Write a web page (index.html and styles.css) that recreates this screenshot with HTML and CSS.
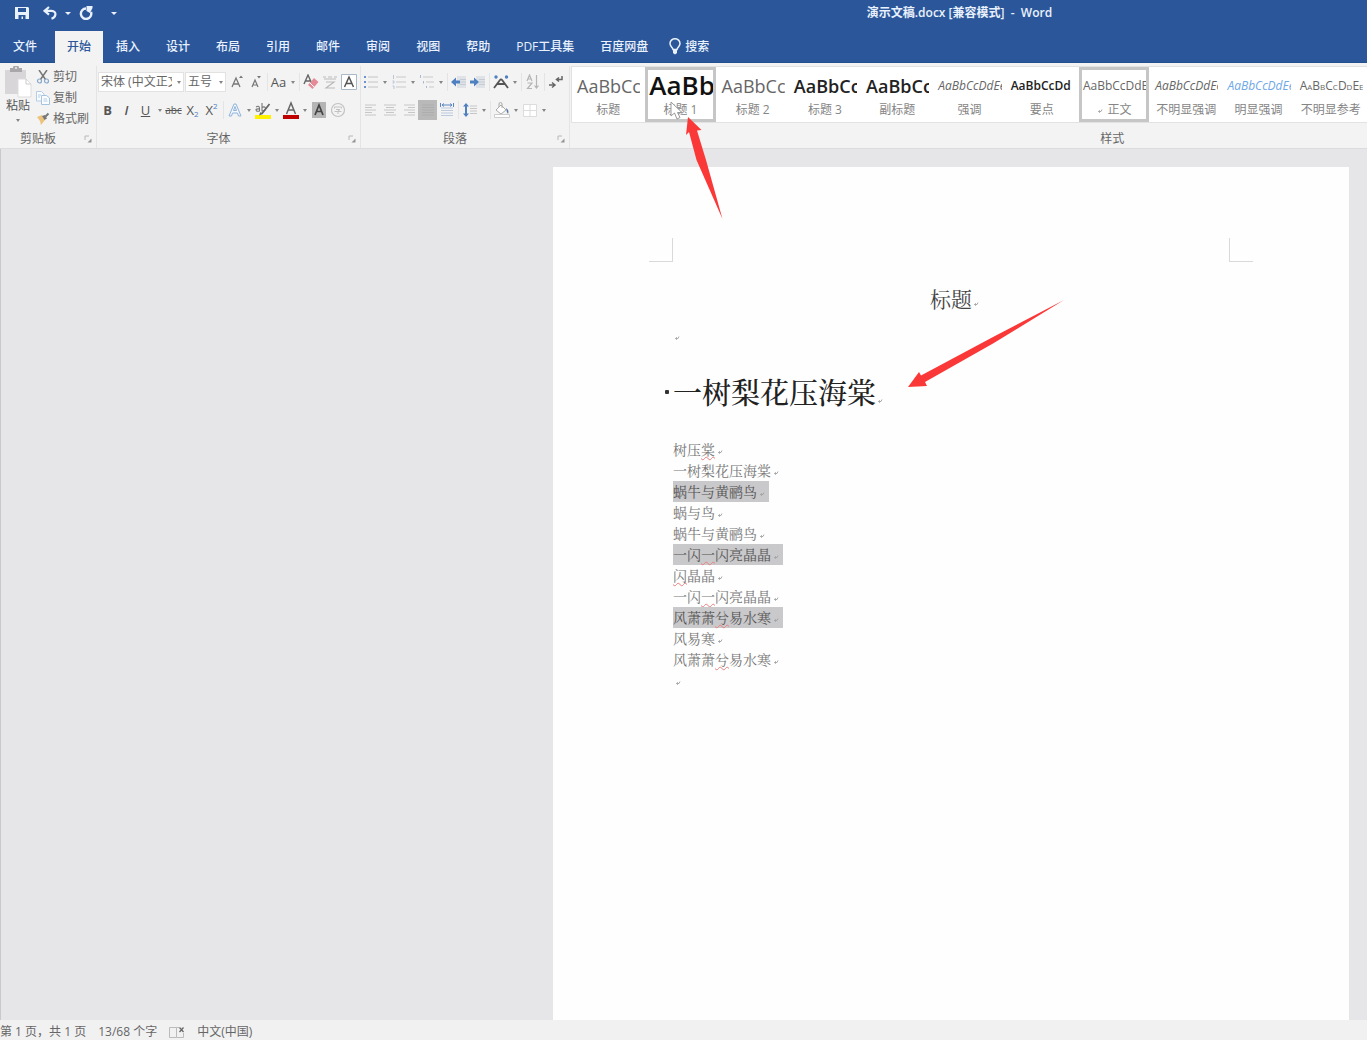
FILE: index.html
```html
<!DOCTYPE html>
<html lang="zh-CN">
<head>
<meta charset="utf-8">
<meta name="viewport" content="width=device-width, initial-scale=1">
<title>演示文稿.docx [兼容模式] - Word</title>
<link rel="stylesheet" href="styles.css">
</head>
<body>
<svg class="sprite" aria-hidden="true">
  <symbol id="mark" viewBox="0 0 8 6"><path d="M6 1.500 5 3.500H2.500M3.800 2.200 2.500 3.500 3.800 4.800" fill="none" stroke="#a0a0a0" stroke-width="0.9"/></symbol>
  <symbol id="launch" viewBox="0 0 8 8"><path d="M1 5V1H5" fill="none" stroke="#b8b8b8"/><path d="M7.500 3.500V7.500H3.500Z" fill="#959595"/></symbol>
</svg>

<header class="titlebar">
  <div class="quick">
    <button aria-label="保存"><svg width="14" height="14" viewBox="0 0 14 14"><path d="M0 1H13L14 2V13H0Z" fill="#e9f1fc"/><path d="M3 2H11V6H3ZM3.500 9H10.500V13H8V10.500H6.500V13H3.500Z" fill="#2b579a"/></svg></button>
    <button aria-label="撤消"><svg width="14" height="14" viewBox="0 0 14 14"><path d="M6 1 1.500 4.800 6 8.600M2 4.800H8.500C11.500 4.800 12.800 6.800 12.300 9 12 10.800 10.800 12 8.500 12.800" fill="none" stroke="#e9f1fc" stroke-width="2.200"/></svg></button>
    <button class="caret light" aria-label="撤消列表"></button>
    <button aria-label="重复"><svg width="14" height="14" viewBox="0 0 14 14"><path d="M7 2.500A5.200 5.200 0 1 0 12 6" fill="none" stroke="#e9f1fc" stroke-width="2.400"/><path d="M7.500 0H13.500V2L11 7 7.500 5Z" fill="#e9f1fc"/></svg></button>
    <button class="caret light" aria-label="自定义快速访问工具栏"></button>
  </div>
  <h1>演示文稿.docx [兼容模式] &nbsp;- &nbsp;Word</h1>
</header>

<nav class="tabs">
  <button class="file">文件</button>
  <button class="active">开始</button>
  <button>插入</button>
  <button>设计</button>
  <button>布局</button>
  <button>引用</button>
  <button>邮件</button>
  <button>审阅</button>
  <button>视图</button>
  <button>帮助</button>
  <button>PDF工具集</button>
  <button>百度网盘</button>
  <button class="search"><svg width="12" height="17" viewBox="0 0 12 17"><path d="M4 11.500C4 9.500 1 8.500 1 5.500A5 4.800 0 0 1 11 5.500C11 8.500 8 9.500 8 11.500Z" fill="none" stroke="#e9f1fc" stroke-width="1.500"/><path d="M4 12H8V15L6 16.500 4 15Z" fill="#e9f1fc"/></svg>搜索</button>
</nav>

<section class="ribbon" aria-label="功能区">
  <div class="group clipboard">
    <div class="tools">
      <button class="paste">
        <svg width="28" height="32" viewBox="0 0 28 32"><path d="M1 4H22V28H1Z" fill="#d9d6d9"/><path d="M6 2H9A3 3 0 0 1 15 2H18V6H6Z" fill="#a9a7a9"/><circle cx="12" cy="2" r="1" fill="#eee"/><path d="M14 13H22L27 18V31H14Z" fill="#fff" stroke="#ddd"/><path d="M22 13V18H27" fill="none" stroke="#ccc"/></svg>
        <span>粘贴</span><i class="caret"></i>
      </button>
      <div class="stack">
        <button><svg width="14" height="14" viewBox="0 0 14 14"><path d="M3 0 9.500 9.500M11 0 4.500 9.500" stroke="#777" stroke-width="1.500"/><circle cx="3.500" cy="11" r="2" fill="none" stroke="#88a8cc" stroke-width="1.200"/><circle cx="10.500" cy="11" r="2" fill="none" stroke="#88a8cc" stroke-width="1.200"/></svg>剪切</button>
        <button><svg width="14" height="14" viewBox="0 0 14 14"><path d="M.5.5H5.500L8 3V10H.5Z" fill="#fafcff" stroke="#b4cde6"/><path d="M5.500 4.500H10.500L13.500 7V13.500H5.500Z" fill="#fafcff" stroke="#a5c4e2"/><path d="M2 4H5M2 6H4M7.500 8H11M7.500 10H11.500" stroke="#b4cde6"/></svg>复制</button>
        <button><svg width="14" height="14" viewBox="0 0 14 14"><path d="M1 5 6 3 9 8 5 13 4 9Z" fill="#edc27b"/><path d="M6 4 8.500 8 11 6.500 9 3Z" fill="#777"/><path d="M9.500 4.500 12.500 1.500" stroke="#777" stroke-width="2"/></svg>格式刷</button>
      </div>
    </div>
    <footer><span>剪贴板</span><button aria-label="剪贴板选项"><svg width="8" height="8"><use href="#launch"/></svg></button></footer>
  </div>

  <div class="group font">
    <div class="tools rows">
      <div class="row">
        <div class="combo family"><select aria-label="字体"><option>宋体 (中文正文)</option></select><i class="caret"></i></div>
        <div class="combo size"><select aria-label="字号"><option>五号</option></select><i class="caret"></i></div>
        <button aria-label="增大字号"><svg width="16" height="16" viewBox="0 0 16 16"><path d="M3 13 7 4 11 13M4.500 10H9.500" fill="none" stroke="#777" stroke-width="1.300"/><path d="M10 4 12 1.500 14 4Z" fill="#777"/></svg></button>
        <button aria-label="减小字号"><svg width="16" height="16" viewBox="0 0 16 16"><path d="M4 13 7 6 10 13M5 11H9" fill="none" stroke="#777" stroke-width="1.200"/><path d="M9 2 11 4.500 13 2Z" fill="#777"/></svg></button>
        <i class="sep"></i>
        <button class="letter" aria-label="更改大小写">Aa</button><button class="caret" aria-label="大小写选项"></button>
        <i class="sep"></i>
        <button aria-label="清除格式"><svg width="16" height="16" viewBox="0 0 16 16"><path d="M1 10 5 1 9 10M2.500 7H7.500" fill="none" stroke="#666" stroke-width="1.400"/><path d="M5 11 11 4 15.500 8 9.500 15Z" fill="#e58b98"/><path d="M7 9 11 13" stroke="#fff"/></svg></button>
        <button aria-label="拼音指南"><svg width="16" height="16" viewBox="0 0 16 16"><path d="M1 3H4M6 3H10M12 3H15M2 5H14M4 8H12L4 14H13" fill="none" stroke="#bbb" stroke-width="1.200"/></svg></button>
        <button aria-label="字符边框"><svg width="16" height="16" viewBox="0 0 16 16"><path d="M.5.5H15.500V15.500H.5Z" fill="#fff" stroke="#a9b9ca"/><path d="M3.500 13 8 3 12.500 13M5 9.500H11" fill="none" stroke="#555" stroke-width="1.500"/></svg></button>
      </div>
      <div class="row">
        <button class="letter bold">B</button>
        <button class="letter italic">I</button>
        <button class="letter under">U</button><button class="caret" aria-label="下划线样式"></button>
        <button class="letter strike">abc</button>
        <button class="letter">X<sub>2</sub></button>
        <button class="letter">X<sup>2</sup></button>
        <i class="sep"></i>
        <button aria-label="文本效果"><svg width="16" height="16" viewBox="0 0 16 16"><path d="M2 14 7 2H9L14 14H11.500L10.500 11H5.500L4.500 14ZM6.500 8.500H9.500L8 4.500Z" fill="#f4f9ff" stroke="#8fb2dc"/></svg></button><button class="caret" aria-label="文本效果选项"></button>
        <button aria-label="突出显示"><svg width="18" height="18" viewBox="0 0 18 18"><path d="M1 14H17V18H1Z" fill="#fff100"/><path d="M2 6Q5 4 5.500 7V10Q2 11 2 8.500 3 7.500 5.500 8M8 2V10Q12 10 11.500 7 10.500 5 8 6.500" fill="none" stroke="#777" stroke-width="1.100"/><path d="M15.500 3 8 12.500 6.500 13 7 11.500" fill="none" stroke="#666" stroke-width="1.800"/></svg></button><button class="caret" aria-label="突出显示颜色"></button>
        <button aria-label="字体颜色"><svg width="18" height="18" viewBox="0 0 18 18"><path d="M1 14H17V18H1Z" fill="#c00000"/><path d="M4.500 13 9 2 13.500 13M6 9H12" fill="none" stroke="#666" stroke-width="1.500"/></svg></button><button class="caret" aria-label="字体颜色选项"></button>
        <button aria-label="字符底纹"><svg width="16" height="16" viewBox="0 0 16 16"><path d="M1 0H15V16H1Z" fill="#b5b5b5"/><path d="M4 13 8 3 12 13M5.500 9.500H10.500" fill="none" stroke="#444" stroke-width="1.700"/></svg></button>
        <button aria-label="带圈字符"><svg width="16" height="16" viewBox="0 0 16 16"><circle cx="8" cy="8" r="6.500" fill="none" stroke="#c2c2c2" stroke-width="1.200"/><path d="M4.500 6.500V5H11.500V6.500M6 7.500H10L8 9V12M4.500 9.500H11.500" fill="none" stroke="#c2c2c2"/></svg></button>
      </div>
    </div>
    <footer><span>字体</span><button aria-label="字体选项"><svg width="8" height="8"><use href="#launch"/></svg></button></footer>
  </div>

  <div class="group para">
    <div class="tools rows">
      <div class="row">
        <button aria-label="项目符号"><svg width="16" height="16" viewBox="0 0 16 16"><path d="M5 3H15M5 8H15M5 13H15" stroke="#c4c4c4"/><path d="M1 2H3V4H1ZM1 7H3V9H1ZM1 12H3V14H1Z" fill="#6c93cb"/></svg></button><button class="caret" aria-label="项目符号库"></button>
        <button aria-label="编号"><svg width="16" height="16" viewBox="0 0 16 16"><path d="M5 3H15M5 8H15M5 13H15" stroke="#c9c9c9"/><path d="M2.500 1V5M1.500 7H3V9H1.500M1.500 12H3V15" fill="none" stroke="#b9c5d6"/></svg></button><button class="caret" aria-label="编号库"></button>
        <button aria-label="多级列表"><svg width="16" height="16" viewBox="0 0 16 16"><path d="M4 3H14M7 8H15M10 13H15" stroke="#c9c9c9"/><path d="M1.500 1V4M4.500 7V9.500M7.500 12V14" fill="none" stroke="#a9b9d0"/></svg></button><button class="caret" aria-label="列表库"></button>
        <i class="sep"></i>
        <button aria-label="减少缩进量"><svg width="16" height="16" viewBox="0 0 16 16"><path d="M6 2H15V14H6Z" fill="#dfe3e8"/><path d="M9 5.500H15M9 8H15M9 10.500H15" stroke="#c6ccd4"/><path d="M0 8 5 3.500V6.500H9V9.500H5V12.500Z" fill="#4f80c0"/></svg></button>
        <button aria-label="增加缩进量"><svg width="16" height="16" viewBox="0 0 16 16"><path d="M6 2H15V14H6Z" fill="#dfe3e8"/><path d="M9 5.500H15M9 8H15M9 10.500H15" stroke="#c6ccd4"/><path d="M9 8 4 3.500V6.500H0V9.500H4V12.500Z" fill="#4f80c0"/></svg></button>
        <i class="sep"></i>
        <button aria-label="中文版式"><svg width="16" height="16" viewBox="0 0 16 16"><circle cx="3" cy="3" r="1.700" fill="#4f80c0"/><circle cx="13.500" cy="3" r="1.700" fill="#4f80c0"/><path d="M1 14 7 6Q8 4.500 9.500 6.500L15 14M5 10H11" fill="none" stroke="#555" stroke-width="1.800"/></svg></button><button class="caret" aria-label="版式选项"></button>
        <i class="sep"></i>
        <button aria-label="排序"><svg width="16" height="16" viewBox="0 0 16 16"><path d="M2 7 4.500 1 7 7M3 5H6M2.500 9H7L2.500 14.500H7M11.500 1V14M9.500 11.500 11.500 14 13.500 11.500" fill="none" stroke="#b5b5b5" stroke-width="1.200"/></svg></button>
        <i class="sep"></i>
        <button aria-label="显示编辑标记"><svg width="16" height="16" viewBox="0 0 16 16"><path d="M14 2V5.500H9M11 3.500 8.500 5.500 11 7.500M1 11H6M4 8.500 7 11 4 13.500" fill="none" stroke="#666" stroke-width="1.500"/></svg></button>
      </div>
      <div class="row">
        <button aria-label="左对齐"><svg width="16" height="16" viewBox="0 0 16 16"><path d="M2 3H13M2 5.500H9M2 8H13M2 10.500H9M2 13H13" stroke="#c6c6c6"/></svg></button>
        <button aria-label="居中"><svg width="16" height="16" viewBox="0 0 16 16"><path d="M2 3H14M4 5.500H12M2 8H14M4 10.500H12M2 13H14" stroke="#c6c6c6"/></svg></button>
        <button aria-label="右对齐"><svg width="16" height="16" viewBox="0 0 16 16"><path d="M3 3H14M7 5.500H14M3 8H14M7 10.500H14M3 13H14" stroke="#c6c6c6"/></svg></button>
        <button class="pressed" aria-label="两端对齐"><svg width="16" height="16" viewBox="0 0 16 16"><path d="M2 3H14M2 5.500H14M2 8H14M2 10.500H14M2 13H14" stroke="#adadad"/></svg></button>
        <button aria-label="分散对齐"><svg width="16" height="16" viewBox="0 0 16 16"><path d="M2 6H14M2 8.500H14M2 11H14M2 13.500H14" stroke="#bccadd"/><path d="M1.500 1V5M14.500 1V5M3 3H13M5 1.500 3 3 5 4.500M11 1.500 13 3 11 4.500" fill="none" stroke="#5b86c0"/></svg></button>
        <i class="sep"></i>
        <button aria-label="行距"><svg width="16" height="16" viewBox="0 0 16 16"><path d="M8 4H15M8 6.500H15M8 9H15M8 11.500H15" stroke="#c6c6c6"/><path d="M4 1 7 4.500H5V11.500H7L4 15 1 11.500H3V4.500H1Z" fill="#4f80c0"/></svg></button><button class="caret" aria-label="行距选项"></button>
        <i class="sep"></i>
        <button aria-label="底纹"><svg width="16" height="16" viewBox="0 0 16 16"><path d="M2 8 7 3 12 8 7 12Z" fill="#fff" stroke="#aaa"/><path d="M5 5V2A1.500 1.500 0 0 1 8 2V6" fill="none" stroke="#aaa"/><path d="M12 6Q15.500 8 14 12 12.500 10 12 6" fill="#55779f"/><path d="M.5 12.500H15.500V15.500H.5Z" fill="#fff" stroke="#ccc"/></svg></button><button class="caret" aria-label="底纹颜色"></button>
        <button aria-label="边框"><svg width="16" height="16" viewBox="0 0 16 16"><path d="M1.500 2.500H14.500V14.500H1.500ZM8 2.500V14.500M1.500 8.500H14.500" fill="#fff" stroke="#dcdcdc"/></svg></button><button class="caret" aria-label="边框选项"></button>
      </div>
    </div>
    <footer><span>段落</span><button aria-label="段落选项"><svg width="8" height="8"><use href="#launch"/></svg></button></footer>
  </div>

  <div class="group styles">
    <div class="gallery">
      <button><b class="big">AaBbCc</b><span>标题</span></button>
      <button class="chosen"><b class="huge">AaBbC</b><span>标题 1</span></button>
      <button><b class="big">AaBbCc</b><span>标题 2</span></button>
      <button><b class="big strong">AaBbCc</b><span>标题 3</span></button>
      <button><b class="big strong">AaBbCc</b><span>副标题</span></button>
      <button><b class="slant">AaBbCcDdEe</b><span>强调</span></button>
      <button><b class="strong">AaBbCcDd</b><span>要点</span></button>
      <button class="chosen"><b>AaBbCcDdEe</b><span><svg width="8" height="6"><use href="#mark"/></svg> 正文</span></button>
      <button><b class="slant">AaBbCcDdEe</b><span>不明显强调</span></button>
      <button><b class="slant blue">AaBbCcDdEe</b><span>明显强调</span></button>
      <button><b class="caps">AaBbCcDdEe</b><span>不明显参考</span></button>
    </div>
    <footer><span>样式</span></footer>
  </div>
</section>

<main class="workspace">
  <article class="page">
    <div class="corners"><i class="left"></i><i class="right"></i></div>
    <p class="title">标题<svg width="8" height="6"><use href="#mark"/></svg></p>
    <p class="blank"><svg width="8" height="6"><use href="#mark"/></svg></p>
    <h2>一树梨花压海棠<svg width="8" height="6"><use href="#mark"/></svg></h2>
    <div class="text">
      <p><span>树压<u>棠</u><svg width="8" height="6"><use href="#mark"/></svg></span></p>
      <p><span>一树梨花压海棠<svg width="8" height="6"><use href="#mark"/></svg></span></p>
      <p><span class="selected">蜗牛与黄鹂鸟<svg width="8" height="6"><use href="#mark"/></svg></span></p>
      <p><span>蜗与鸟<svg width="8" height="6"><use href="#mark"/></svg></span></p>
      <p><span>蜗牛与黄鹂鸟<svg width="8" height="6"><use href="#mark"/></svg></span></p>
      <p><span class="selected">一闪<u>一</u>闪亮晶晶<svg width="8" height="6"><use href="#mark"/></svg></span></p>
      <p><span><u>闪</u>晶晶<svg width="8" height="6"><use href="#mark"/></svg></span></p>
      <p><span>一闪<u>一</u>闪亮晶晶<svg width="8" height="6"><use href="#mark"/></svg></span></p>
      <p><span class="selected">风萧萧<u>兮</u>易水寒<svg width="8" height="6"><use href="#mark"/></svg></span></p>
      <p><span>风易寒<svg width="8" height="6"><use href="#mark"/></svg></span></p>
      <p><span>风萧萧<u>兮</u>易水寒<svg width="8" height="6"><use href="#mark"/></svg></span></p>
      <p><span><svg width="8" height="6"><use href="#mark"/></svg></span></p>
    </div>
  </article>
</main>

<footer class="status">
  <span>第 1 页，共 1 页</span>
  <span>13/68 个字</span>
  <svg width="16" height="12" viewBox="0 0 16 12"><path d="M.5 1.500H7.500V11.500H.5ZM7.500 1.500H10M7.500 11.500H14.500V7" fill="none" stroke="#bbb"/><path d="M10.500 1.500 14.500 6M14.500 1.500 10.500 6" stroke="#666" stroke-width="1.300"/></svg>
  <span>中文(中国)</span>
</footer>

<svg class="pointer" width="18" height="20" viewBox="0 0 18 20" aria-hidden="true"><path d="M2 1V15L5.500 12 8 18 11 16.500 8.500 11.500H13Z" fill="#fff" stroke="#999"/></svg>
<svg class="arrow-up" width="44" height="104" viewBox="0 0 44 104" aria-hidden="true"><path d="M4 0 17.500 13 13 13.500 22 43 38.500 102 12.500 43 5 15 2 18Z" fill="#fb3838"/></svg>
<svg class="arrow-down" width="160" height="90" viewBox="0 0 160 90" aria-hidden="true"><path d="M0 87 11 72 13 75.500 85 37 156 0 85 43.500 17 82 19 86Z" fill="#fb3838"/></svg>
</body>
</html>
```

FILE: styles.css
```css
* { box-sizing: border-box; }

body {
  position: relative;
  display: flex;
  flex-direction: column;
  min-height: 100vh;
  margin: 0;
  background: #e6e6e8;
  color: #666;
  font: 12px/16px "Open Sans", "Noto Sans CJK SC", sans-serif;
}

h1, h2, p { margin: 0; font-weight: 400; }

button {
  display: flex;
  align-items: center;
  justify-content: center;
  padding: 0;
  border: 0;
  background: none;
  color: inherit;
  font: inherit;
  white-space: nowrap;
}

svg { flex: none; }
.sprite { position: absolute; width: 0; height: 0; }

/* Title bar and tabs */
.titlebar {
  display: grid;
  grid-template-columns: 552px 1fr;
  align-items: center;
  height: 26px;
  background: #2b579a;
  color: #e9f1fc;
}
.titlebar h1 { font-size: 12px; font-weight: 600; text-align: center; }
.quick { display: flex; gap: 8px; padding-left: 12px; }
.quick button { width: 20px; height: 20px; }
.quick .caret { width: 8px; margin: 0 0 0 -4px; }
.quick .caret + button { margin-left: -4px; }
.quick .caret:last-child { margin-left: 6px; }

.tabs {
  display: flex;
  height: 37px;
  padding-top: 5px;
  border-bottom: 1px solid #24508f;
  background: #2b579a;
  color: #e9f1fc;
}
.tabs button { padding: 0 13px; font-weight: 500; }
.tabs .file { padding-right: 18px; }
.tabs .active { height: 32px; padding: 0 12px; background: #f3f3f3; color: #2b579a; }
.tabs .search { gap: 4px; padding: 0 8px; }

.caret { display: flex; align-items: center; justify-content: center; flex: none; width: 9px; }
.caret::before {
  content: "";
  border: 2px solid transparent;
  border-top: 3px solid #858585;
  border-bottom: 0;
}
.caret.light::before { border-width: 3px 3px 0; border-top-color: #e9f1fc; }

/* Ribbon */
.ribbon {
  display: flex;
  height: 86px;
  padding-top: 3px;
  border-bottom: 1px solid #dcdcde;
  background: #f3f3f3;
}
.group { display: flex; flex-direction: column; flex: none; border-right: 1px solid #e4e4e4; }
.clipboard { width: 97px; }
.font { width: 264px; }
.para { width: 209px; }
.styles { flex: 1; min-width: 0; border-right: 0; padding-left: 1px; }
.tools { display: flex; height: 66px; }
.group > footer { display: flex; align-items: center; height: 18px; padding: 0 4px 0 0; }
.group > footer span { flex: 1; padding-right: 8px; text-align: center; }

.paste { flex-direction: column; justify-content: flex-start; width: 36px; color: #555; }
.paste .caret { height: 12px; }
.stack { display: flex; flex-direction: column; }
.stack button { gap: 3px; justify-content: flex-start; height: 21px; }

.rows { flex-direction: column; gap: 8px; padding: 6px 0 0; }
.font .rows { padding-left: 1px; }
.row { display: flex; align-items: center; height: 20px; }
.row button { flex: none; width: 19px; height: 20px; }
.row .caret { width: 9px; }
.sep { flex: none; width: 1px; height: 18px; margin: 0 1px 0 2px; background: #e4e4e4; }
.row .pressed { height: 20px; background: #b9b9b9; }

.combo { display: flex; flex: none; height: 20px; margin-right: 1px; border: 1px solid #e2e2e2; background: #fff; }
.combo select {
  flex: 1;
  min-width: 0;
  padding: 0 2px;
  border: 0;
  appearance: none;
  background: #fff;
  color: #666;
  font: inherit;
  overflow: hidden;
}
.family { width: 86px; }
.size { width: 41px; }

.letter { color: #555; font-size: 13px; }
.bold { font-weight: 700; }
.italic { font-style: italic; font-weight: 600; }
.under { text-decoration: underline; }
.strike { font-size: 10px; text-decoration: line-through; }
.letter sub, .letter sup { color: #4f80c0; font-size: 8px; line-height: 8px; }
.letter sub { margin-top: 8px; }
.letter sup { margin-top: -8px; }

/* Style gallery */
.gallery {
  display: grid;
  grid-template-columns: repeat(11, minmax(0, 1fr));
  height: 59px;
  border: 1px solid #e2e2e2;
  border-right: 0;
  background: #fff;
}
.gallery button {
  flex-direction: column;
  justify-content: flex-start;
  height: 55px;
  margin: 0 1px;
  border: 3px solid transparent;
}
.gallery .chosen { border-color: #c6c6c6; }
.gallery b {
  width: 100%;
  height: 28px;
  margin-top: 4px;
  padding-left: 1px;
  overflow: hidden;
  font-size: 12px;
  font-weight: 400;
  line-height: 24px;
  text-align: left;
}
.gallery span { color: #858585; }
.gallery .big { font-size: 18px; }
.gallery .huge { color: #111; font-size: 26px; font-weight: 600; line-height: 22px; }
.gallery .strong { color: #222; font-weight: 600; }
.gallery .slant { font-style: italic; }
.gallery .blue { color: #6fa8e6; }
.gallery .caps { font-variant: small-caps; }
.styles > footer { margin-top: 7px; padding: 0 0 0 37%; }

/* Document */
.workspace { display: flex; flex: 1; justify-content: flex-end; padding: 18px 18px 0 0; border-left: 1px solid #c9c9cb; }
.page {
  width: 796px;
  padding: 71px 120px 40px;
  background: #fefefe;
  color: #777;
  font-family: "Noto Serif CJK SC", "Noto Sans CJK SC", serif;
  font-weight: 300;
}
.corners { display: flex; justify-content: space-between; margin: 0 -24px; }
.corners i { width: 24px; height: 24px; border: 0 solid #d9d9d9; border-bottom-width: 1px; }
.corners .left { border-right-width: 1px; }
.corners .right { border-left-width: 1px; }
.title { margin-top: 15px; padding-left: 8px; color: #444; font-size: 21px; line-height: 42px; text-align: center; }
.blank { margin-top: 6px; line-height: 21px; }
.page h2 { margin-top: 24px; color: #222; font-size: 29px; font-weight: 500; line-height: 44px; }
.page h2::before {
  content: "";
  float: left;
  width: 4px;
  height: 4px;
  margin: 20px 0 0 -8px;
  border-radius: 1px;
  background: #333;
}
.text { margin-top: 25px; font-size: 14px; line-height: 21px; }
.text p { height: 21px; }
.text span { display: inline-block; padding-right: 3px; }
.text svg { margin-left: 1px; }
.selected { background: #c9c8ca; color: #555; }
.text u { text-decoration: underline wavy #e88080 1px; text-underline-offset: 1px; }

/* Status bar */
.status { display: flex; align-items: center; gap: 12px; height: 20px; padding-top: 3px; background: #f1f1f2; }

/* Pointer and annotations lying over the window */
.pointer, .arrow-up, .arrow-down { position: absolute; pointer-events: none; }
.pointer { top: 101px; left: 669px; }
.arrow-up { top: 117px; left: 684px; }
.arrow-down { top: 300px; left: 908px; }
```
